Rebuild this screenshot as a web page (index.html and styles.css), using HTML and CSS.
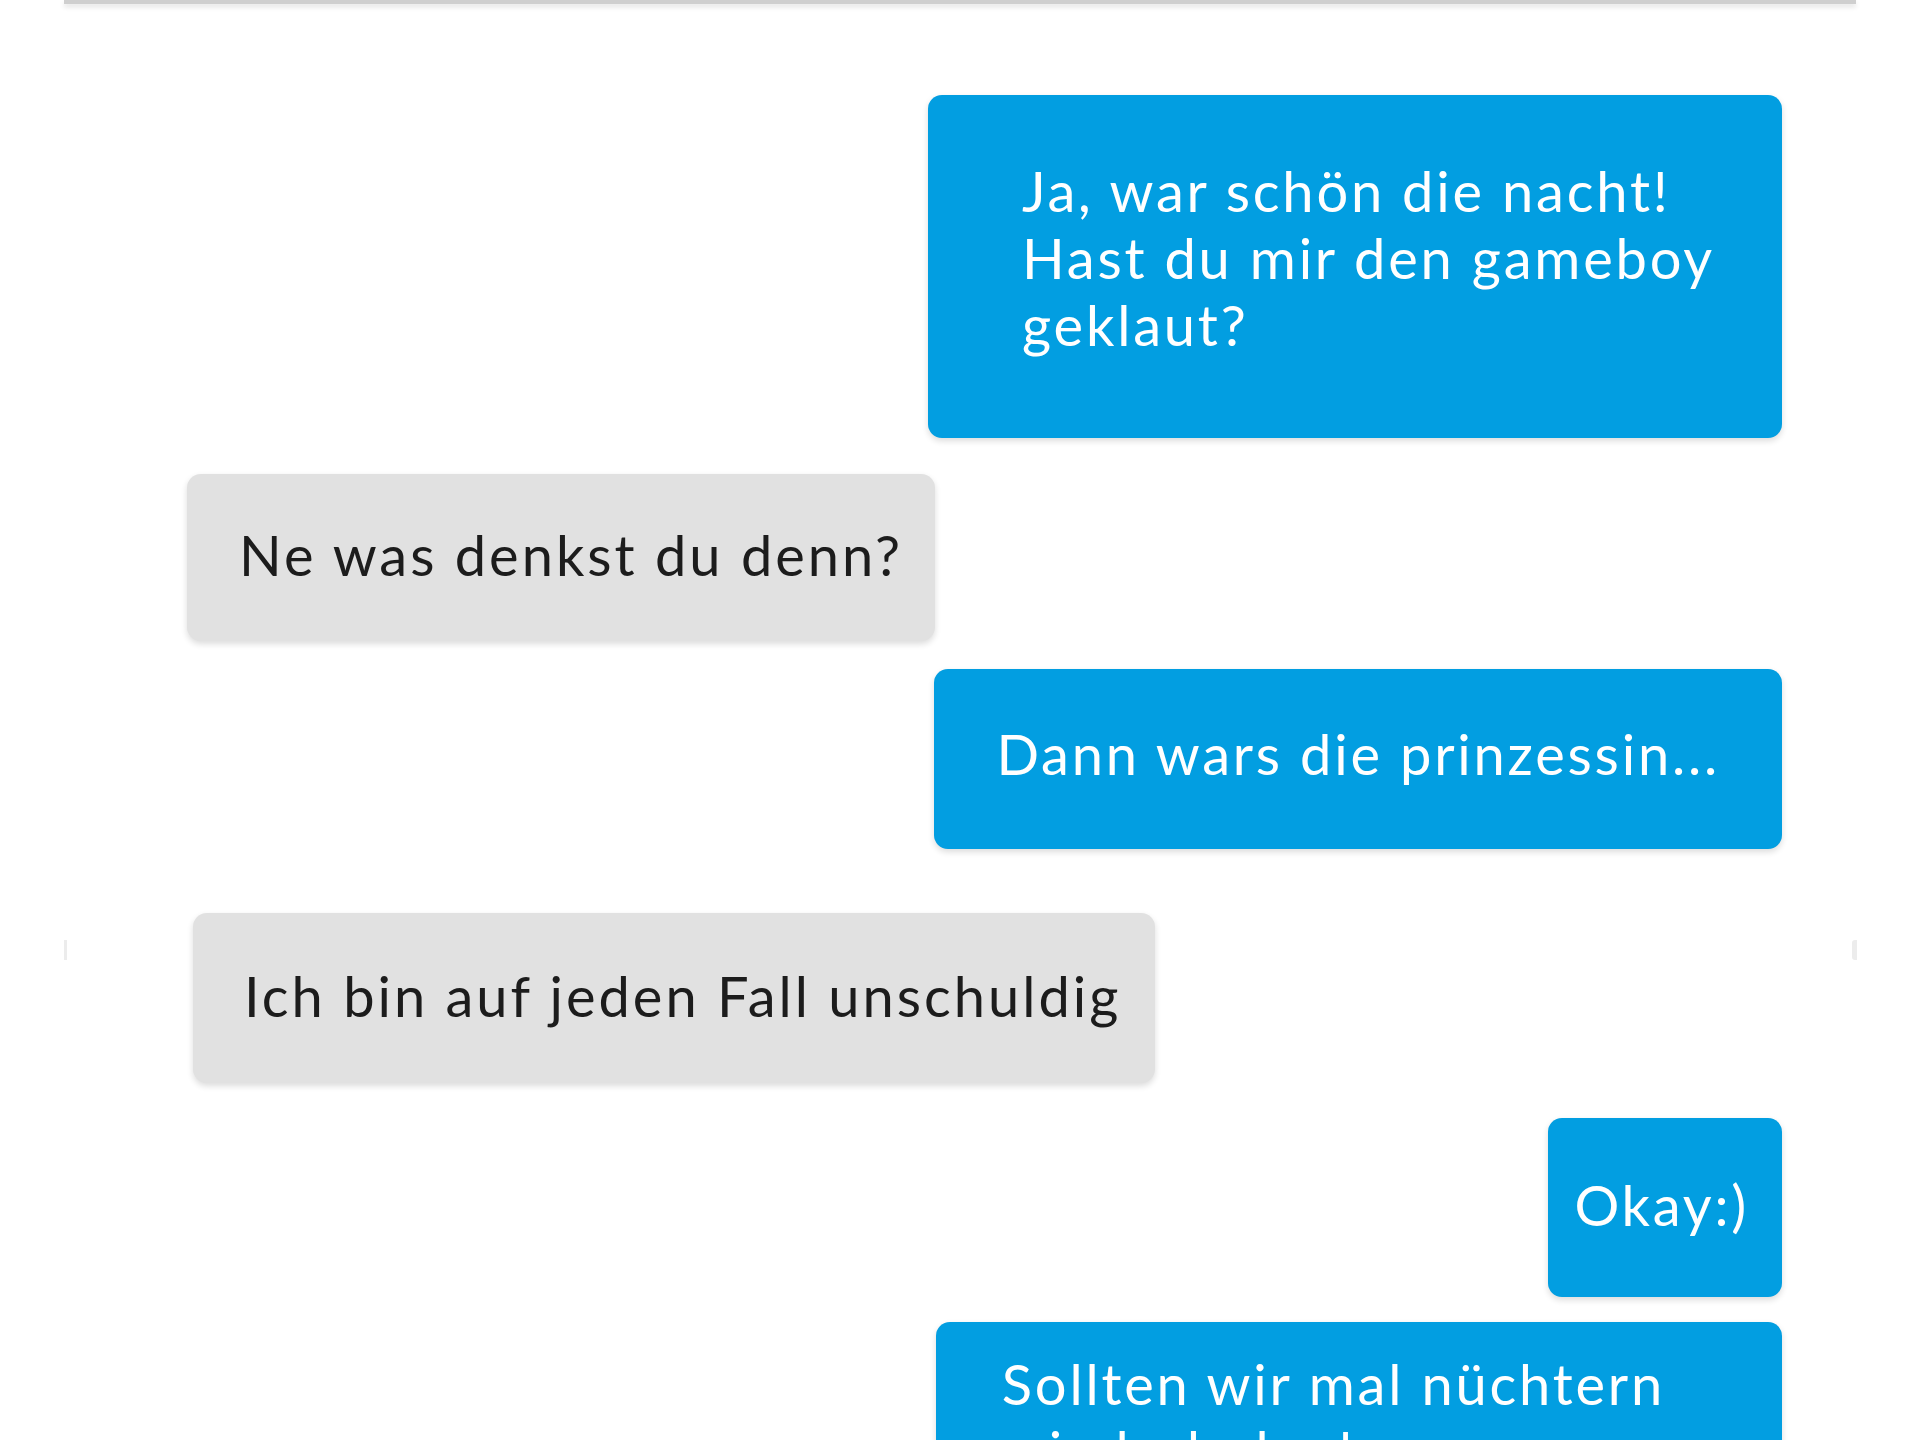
FILE: index.html
```html
<!DOCTYPE html>
<html lang="de">
<head>
    <meta charset="UTF-8">
    <meta name="viewport" content="width=device-width, initial-scale=1.0">
    <title>Chat</title>
    <link rel="stylesheet" href="styles.css">
</head>
<body>
    <div class="topbar"></div>

    <div class="chat">
        <span class="edge edge-left"></span>
        <span class="edge edge-right"></span>

        <div class="bubble out msg-1">Ja, war schön die nacht!<br>Hast du mir den gameboy<br>geklaut?</div>
        <div class="bubble in msg-2">Ne was denkst du denn?</div>
        <div class="bubble out msg-3">Dann wars die prinzessin...</div>
        <div class="bubble in msg-4">Ich bin auf jeden Fall unschuldig</div>
        <div class="bubble out msg-5">Okay:)</div>
        <div class="bubble out msg-6">Sollten wir mal nüchtern<br>wiederholen!</div>
    </div>
</body>
</html>
```

FILE: styles.css
```css
:root {
    --blue: #029ee1;
    --grey: #e1e1e1;
    --ink: #1c1c1c;
}

* {
    margin: 0;
    padding: 0;
    box-sizing: border-box;
}

html, body {
    height: 100%;
    overflow: hidden;
}

body {
    background: #ffffff;
    font-family: 'Lato', 'Open Sans', sans-serif;
}

.topbar {
    height: 4px;
    margin: 0 64px;
    background: #cfcfcf;
    box-shadow: 0 3px 5px rgba(0, 0, 0, 0.12);
}

.chat {
    position: relative;
    display: flex;
    flex-direction: column;
    padding-top: 91px;
}

.edge {
    position: absolute;
    top: 936px;
    width: 3px;
    height: 20px;
    background: #ececec;
}

.edge-left { left: 64px; }
.edge-right { left: 1852px; border-radius: 3px 0 0 3px; width: 5px; }

.bubble {
    font-size: 56px;
    line-height: 67px;
    letter-spacing: 2.8px;
    border-radius: 14px;
    box-shadow: 0 3px 6px rgba(0, 0, 0, 0.14);
    white-space: nowrap;
}

.out {
    align-self: flex-end;
    margin-right: 138px;
    background: var(--blue);
    color: #ffffff;
}

.in {
    align-self: flex-start;
    background: var(--grey);
    color: var(--ink);
    letter-spacing: 3px;
}

.msg-1 { padding: 62px 67px 80px 94px; }
.msg-2 { margin-top: 36px; margin-left: 187px; padding: 47px 32px 53px 52px; }
.msg-3 { margin-top: 28px; padding: 51px 62px 62px 62px; }
.msg-4 { margin-top: 64px; margin-left: 193px; padding: 49px 34px 54px 51px; }
.msg-5 { margin-top: 35px; padding: 53px 33px 59px 26px; }
.msg-6 { margin-top: 25px; padding: 28px 117px 40px 66px; }
```
